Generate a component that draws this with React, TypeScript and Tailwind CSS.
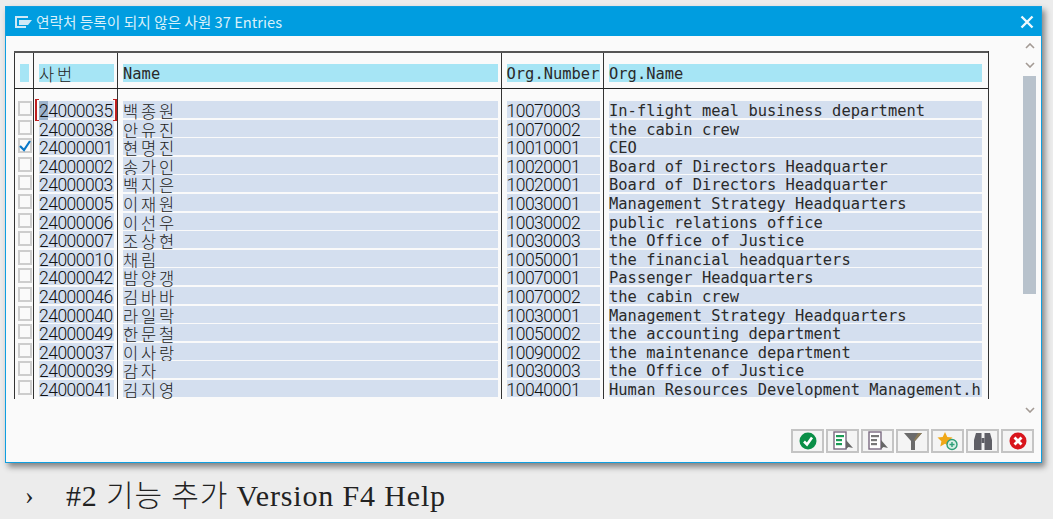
const rows = [
  ["24000035", "백종원", "10070003", "In-flight meal business department"],
  ["24000038", "안유진", "10070002", "the cabin crew"],
  ["24000001", "현명진", "10010001", "CEO"],
  ["24000002", "송가인", "10020001", "Board of Directors Headquarter"],
  ["24000003", "백지은", "10020001", "Board of Directors Headquarter"],
  ["24000005", "이재원", "10030001", "Management Strategy Headquarters"],
  ["24000006", "이선우", "10030002", "public relations office"],
  ["24000007", "조상현", "10030003", "the Office of Justice"],
  ["24000010", "채림", "10050001", "the financial headquarters"],
  ["24000042", "밤양갱", "10070001", "Passenger Headquarters"],
  ["24000046", "김바바", "10070002", "the cabin crew"],
  ["24000040", "라일락", "10030001", "Management Strategy Headquarters"],
  ["24000049", "한문철", "10050002", "the accounting department"],
  ["24000037", "이사랑", "10090002", "the maintenance department"],
  ["24000039", "감자", "10030003", "the Office of Justice"],
  ["24000041", "김지영", "10040001", "Human Resources Development Management.h"],
];

const mono = "font-['DejaVu_Sans_Mono','Noto_Sans_CJK_KR',monospace] text-[15.4px] leading-[20px] tracking-[0.03px] text-[#2a2a2a]";
const digits = "font-['Roboto',sans-serif] font-light text-[17.5px] leading-[20px] tracking-[-0.5px] text-[#111]";
const korean = "font-['Noto_Sans_CJK_KR',sans-serif] font-light text-[16.5px] leading-[20px] tracking-[2.8px] text-[#222]";
const cols = "grid grid-cols-[19px_84px_383.5px_102.5px_384px] w-[974px]";
const cellLine = "border-l-[1.5px] border-[#333]";

function ToolButton({ children }: { children: React.ReactNode }) {
  return (
    <div className="w-[33px] h-[24px] border-2 border-[#c4c4c4] bg-[#f4f4f4] flex items-center justify-center">
      {children}
    </div>
  );
}

function Chevron({ up }: { up?: boolean }) {
  return (
    <svg width="10" height="6" viewBox="0 0 10 6" fill="none" stroke="#a39a94" strokeWidth="1.6">
      <path d={up ? "M1 5 L5 1 L9 5" : "M1 1 L5 5 L9 1"} />
    </svg>
  );
}

function ListIcon({ green }: { green?: boolean }) {
  const c = green ? "#1a9a55" : "#777";
  return (
    <svg width="24" height="20" viewBox="0 0 24 20">
      <rect x="3" y="1" width="12" height="17" fill="#fff" stroke="#7a6a80" strokeWidth="1.4" />
      <rect x="5" y="4" width="8" height="2.2" fill={c} />
      <rect x="5" y="8" width="6" height="2.2" fill={c} />
      <rect x="5" y="12" width="6" height="2.2" fill={c} />
      <path d="M15 9 L15 18 L17.5 16 L22 17 Z" fill="#666" />
    </svg>
  );
}

export default function App() {
  return (
    <div className="w-[1053px] h-[519px] bg-[#ececec] overflow-hidden pt-[6px] pl-[5px]">
      <div className="w-[1037px] h-[457px] flex flex-col border border-[#0f9fe0] bg-[#fafafa] shadow-[3px_4px_6px_rgba(0,0,0,0.45)]">
        <div className="h-[29px] bg-[#009de0] flex items-center pl-[8px] pr-[6px] shrink-0">
          <svg width="19" height="13" viewBox="0 0 19 13" className="mr-[3px]">
            <path d="M1 1 H14 V3 H3 V11 H12 V13 H1 Z" fill="#cfe9f6" />
            <path d="M5 5 H18 L14 10 H5 Z" fill="#cfe9f6" />
          </svg>
          <span className="font-['Noto_Sans_CJK_KR',sans-serif] text-[14.7px] text-[#d8f0fa] leading-[18px]">
            연락처 등록이 되지 않은 사원 37 Entries
          </span>
          <svg width="14" height="14" viewBox="0 0 14 14" className="ml-auto mr-[1px]" stroke="#eef9fd" strokeWidth="2.4">
            <path d="M1.5 1.5 L12.5 12.5 M12.5 1.5 L1.5 12.5" />
          </svg>
        </div>

        <div className="flex flex-1 min-h-0">
          <div className="flex-1 min-w-0 flex flex-col">
            <div className="pl-[8px] pt-[15px]">
              <div className="w-[975px] border-r-[1.5px] border-[#333]">
                {/* 헤더 */}
                <div className={`${cols} h-[38px] border-t-2 border-b-[1.5px] border-t-[#555] border-b-[#222]`}>
                  <div className={`${cellLine} pl-[5px] pt-[11px]`}>
                    <div className="w-[9px] h-[18px] bg-[#a6e5f5]" />
                  </div>
                  {["사번", "Name", "Org.Number", "Org.Name"].map((h, i) => (
                    <div key={h} className={`${cellLine} pl-[5px] pr-[3px] pt-[11px] ${i === 3 ? "pr-[5px]" : ""}`}>
                      <div className={`${i === 0 ? korean : mono} h-[18px] bg-[#a6e5f5] whitespace-nowrap ${i === 0 ? "tracking-[1px]" : ""}`}>
                        {h}
                      </div>
                    </div>
                  ))}
                </div>
                {/* 행 사이 여백 */}
                <div className={`${cols} h-[12px]`}>
                  {[0, 1, 2, 3, 4].map((i) => (
                    <div key={i} className={cellLine} />
                  ))}
                </div>
                {rows.map((r, idx) => (
                  <div key={r[0]} className={`${cols} h-[18.6px]`}>
                    <div className={`${cellLine} pl-[3px]`}>
                      <div className="w-[14px] h-[15px] border-2 border-[#cdcdcd] bg-[#fafafa] flex items-center justify-center">
                        {idx === 2 && (
                          <svg width="14" height="12" viewBox="0 0 14 12" fill="none" stroke="#0a78c8" strokeWidth="2.2" className="shrink-0">
                            <path d="M2 6 L6 10 L12 1" />
                          </svg>
                        )}
                      </div>
                    </div>
                    <div className={`${cellLine} relative pl-[5px] pr-[3px]`}>
                      <div className={`${digits} h-[17px] bg-[#d4dfef] whitespace-nowrap`}>
                        {idx === 0 ? (
                          <>
                            <span className="bg-[#9db3cc]">2</span>4000035
                          </>
                        ) : (
                          r[0]
                        )}
                      </div>
                      {idx === 0 && (
                        <>
                          <div className="absolute z-10 left-[1px] top-[-2px] w-[4px] h-[22px] border-l-2 border-t border-b border-[#c02020]" />
                          <div className="absolute z-10 right-[0px] top-[-2px] w-[4px] h-[22px] border-r-2 border-t border-b border-[#c02020]" />
                        </>
                      )}
                    </div>
                    <div className={`${cellLine} pl-[5px] pr-[3px]`}>
                      <div className={`${korean} h-[17px] bg-[#d4dfef]`}>{r[1]}</div>
                    </div>
                    <div className={`${cellLine} pl-[5px] pr-[3px]`}>
                      <div className={`${digits} h-[17px] bg-[#d4dfef] whitespace-nowrap`}>{r[2]}</div>
                    </div>
                    <div className={`${cellLine} pl-[5px] pr-[5px]`}>
                      <div className={`${mono} h-[17px] bg-[#d4dfef] whitespace-nowrap`}>{r[3]}</div>
                    </div>
                  </div>
                ))}
              </div>
            </div>
            <div className="mt-auto flex justify-end gap-[2px] pb-[9px] mr-[-13px]">
              <ToolButton>
                <svg width="18" height="18" viewBox="0 0 18 18">
                  <circle cx="9" cy="9" r="8.5" fill="#0a8f47" />
                  <path d="M5 9.5 L8 12.5 L13 5.5" fill="none" stroke="#fff" strokeWidth="2.6" />
                </svg>
              </ToolButton>
              <ToolButton>
                <ListIcon green />
              </ToolButton>
              <ToolButton>
                <ListIcon />
              </ToolButton>
              <ToolButton>
                <svg width="20" height="20" viewBox="0 0 20 20">
                  <path d="M1 2 H19 L12 10 V19 H8 V10 Z" fill="#6b6b6b" />
                  <path d="M12 10 L19 2 H15 L11 9 Z" fill="#8a7a58" />
                </svg>
              </ToolButton>
              <ToolButton>
                <svg width="22" height="20" viewBox="0 0 22 20">
                  <path d="M8 1 L10.3 6 L15.5 6.6 L11.6 10.2 L12.7 15.5 L8 12.8 L3.3 15.5 L4.4 10.2 L0.5 6.6 L5.7 6 Z" fill="#f0a818" />
                  <circle cx="15" cy="13.5" r="5" fill="#d8efe6" stroke="#2f9f78" strokeWidth="1.4" />
                  <path d="M15 11 V16 M12.5 13.5 H17.5" stroke="#2f9f78" strokeWidth="1.4" />
                </svg>
              </ToolButton>
              <ToolButton>
                <svg width="20" height="20" viewBox="0 0 20 20" fill="#5f5f66">
                  <path d="M3 2 H8.5 V19 H1 V9 Z" />
                  <path d="M17 2 H11.5 V19 H19 V9 Z" />
                  <rect x="8.5" y="7" width="3" height="5" />
                </svg>
              </ToolButton>
              <ToolButton>
                <svg width="18" height="18" viewBox="0 0 18 18">
                  <circle cx="9" cy="9" r="8.5" fill="#d8151c" />
                  <path d="M5.5 5.5 L12.5 12.5 M12.5 5.5 L5.5 12.5" stroke="#fff" strokeWidth="2.8" />
                </svg>
              </ToolButton>
            </div>
          </div>

          {/* 스크롤바 */}
          <div className="w-[17px] mr-[3px] flex flex-col items-center pt-[7px] pb-[49px] shrink-0">
            <Chevron up />
            <div className="mt-[13px]">
              <Chevron />
            </div>
            <div className="w-[13px] h-[218px] bg-[#b8c2cc] mt-[8px]" />
            <div className="mt-auto">
              <Chevron />
            </div>
          </div>
        </div>
      </div>

      <div className="flex items-center h-[64px] pl-[20px] font-['Liberation_Serif','Noto_Sans_CJK_KR',serif] text-[30px] text-[#222] tracking-[0.85px]">
        <span className="w-[41px] text-[26px]">›</span>
        <span>
          #2 <span className="font-light">기능 추가</span> Version F4 Help
        </span>
      </div>
    </div>
  );
}
